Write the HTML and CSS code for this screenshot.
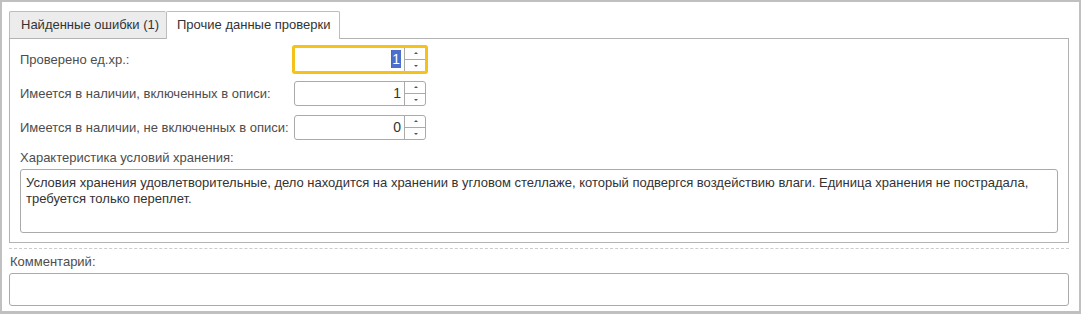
FILE: index.html
```html
<!DOCTYPE html>
<html lang="ru">
<head>
<meta charset="utf-8">
<link rel="stylesheet" href="styles.css">
</head>
<body>
<div class="frame">
  <div class="tabs">
    <div class="tab">Найденные ошибки (1)</div>
    <div class="tab active">Прочие данные проверки</div>
  </div>
  <div class="panel">
    <div class="row">
      <div class="label">Проверено ед.хр.:</div>
      <div class="num focused">
        <div class="val"><span class="sel">1</span></div>
        <div class="spin"><span class="up"></span><span class="down"></span></div>
      </div>
    </div>
    <div class="row">
      <div class="label">Имеется в наличии, включенных в описи:</div>
      <div class="num">
        <div class="val">1</div>
        <div class="spin"><span class="up"></span><span class="down"></span></div>
      </div>
    </div>
    <div class="row">
      <div class="label">Имеется в наличии, не включенных в описи:</div>
      <div class="num">
        <div class="val">0</div>
        <div class="spin"><span class="up"></span><span class="down"></span></div>
      </div>
    </div>
    <div class="label block">Характеристика условий хранения:</div>
    <div class="textarea">Условия хранения удовлетворительные, дело находится на хранении в угловом стеллаже, который подвергся воздействию влаги. Единица хранения не пострадала, требуется только переплет.</div>
  </div>
  <div class="divider"></div>
  <div class="label comment-label">Комментарий:</div>
  <div class="comment"></div>
</div>
</body>
</html>
```

FILE: styles.css
```css
html, body {
  margin: 0;
  padding: 0;
  background: #ffffff;
}

body {
  font-family: "Liberation Sans", Arial, sans-serif;
  font-size: 13px;
  color: #333333;
}

.frame {
  box-sizing: border-box;
  width: 1081px;
  height: 314px;
  border: 2px solid #c0c0c0;
  border-bottom-width: 3px;
  padding: 9px 10px 0 7px;
  display: flex;
  flex-direction: column;
}

.tabs {
  display: flex;
  height: 27px;
  flex-shrink: 0;
  position: relative;
  z-index: 1;
}

.tab {
  box-sizing: border-box;
  height: 27px;
  padding: 0 10px;
  line-height: 26px;
  border: 1px solid #bdbdbd;
  border-bottom: none;
  border-radius: 2px 2px 0 0;
  background: #ececec;
  color: #333333;
  white-space: nowrap;
}

.tab:first-child {
  width: 157px;
  padding-left: 11px;
  border-right: none;
}

.tab.active {
  width: 174px;
  height: 28px;
  background: #ffffff;
  padding-left: 10px;
}

.panel {
  box-sizing: border-box;
  height: 205px;
  flex-shrink: 0;
  border: 1px solid #b3b3b3;
  padding: 8px 10px 8px 10px;
  display: flex;
  flex-direction: column;
}

.row {
  display: flex;
  align-items: center;
  height: 25px;
  flex-shrink: 0;
  margin-bottom: 9px;
}

.label {
  color: #4d4d4d;
  white-space: nowrap;
}

.row .label {
  width: 274px;
}

.num {
  box-sizing: border-box;
  width: 132px;
  height: 25px;
  border: 1px solid #aaaaaa;
  border-radius: 3px;
  display: flex;
  background: #fff;
}

.num.focused {
  border-color: #f5c21b;
  border-radius: 1px;
  box-shadow: 0 0 0 2px #f5c21b;
}

.val {
  flex: 1;
  text-align: right;
  padding-right: 3px;
  line-height: 23px;
  font-size: 14px;
  color: #333;
}

.sel {
  background: #4d6fcc;
  color: #fff;
  border-left: 1px solid #7a6a20;
  padding: 0 1px 0 0;
  display: inline-block;
  line-height: 18px;
}

.spin {
  width: 20px;
  border-left: 1px solid #aaaaaa;
  display: flex;
  flex-direction: column;
}

.spin span {
  flex: 1;
  position: relative;
}

.spin .up {
  border-bottom: 1px solid #aaaaaa;
}

.spin .up::after,
.spin .down::after {
  content: "";
  position: absolute;
  left: 9px;
  width: 0;
  height: 0;
  border-left: 2px solid transparent;
  border-right: 2px solid transparent;
}

.spin .up::after {
  top: 4px;
  border-bottom: 2px solid #555;
}

.spin .down::after {
  top: 5px;
  border-top: 2px solid #555;
}

.label.block {
  margin-top: 1px;
  height: 15px;
  line-height: 15px;
  flex-shrink: 0;
}

.textarea {
  box-sizing: border-box;
  margin-top: 4px;
  height: 64px;
  flex-shrink: 0;
  border: 1px solid #aaaaaa;
  border-radius: 3px;
  padding: 5px 5px;
  line-height: 16px;
  color: #333333;
}

.divider {
  margin-top: 5px;
  height: 0;
  flex-shrink: 0;
  border-top: 1px dashed #cccccc;
  width: 1060px;
}

.comment-label {
  margin-top: 5px;
  height: 15px;
  line-height: 15px;
  padding-left: 1px;
  flex-shrink: 0;
}

.comment {
  box-sizing: border-box;
  margin-top: 4px;
  width: 1060px;
  height: 33px;
  flex-shrink: 0;
  border: 1px solid #aaaaaa;
  border-radius: 3px;
}
```
